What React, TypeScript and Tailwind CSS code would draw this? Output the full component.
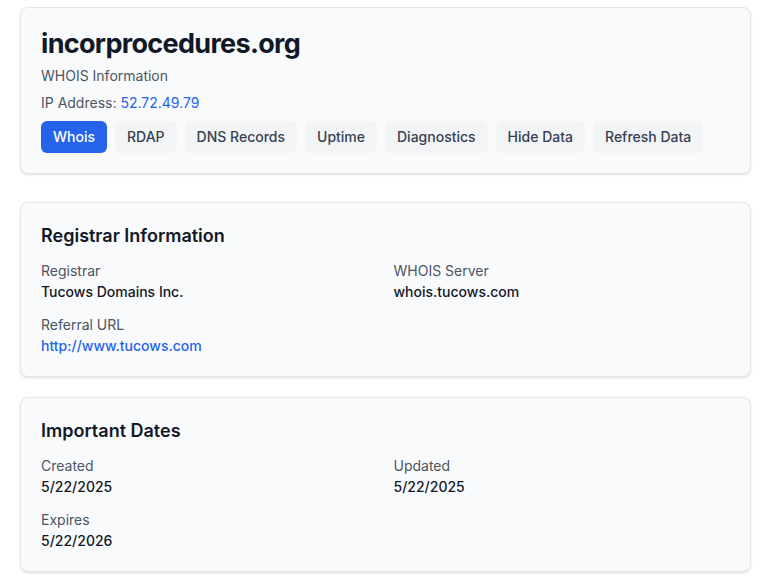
import * as React from "react";

const tabs = ["Whois", "RDAP", "DNS Records", "Uptime", "Diagnostics", "Hide Data", "Refresh Data"];

function Field({ label, value, link }: { label: string; value: string; link?: boolean }) {
  return (
    <div>
      <div className="text-sm leading-5 text-[#4b5563]">{label}</div>
      <div className={"mt-px text-sm leading-5 font-medium " + (link ? "text-[#2563eb]" : "text-[#111827]")}>
        {value}
      </div>
    </div>
  );
}

function Section({ title, children }: { title: string; children: React.ReactNode }) {
  return (
    <div className="rounded-lg border border-[#e5e7eb] bg-[#f9fafb] px-5 pt-[19px] pb-5 shadow-sm">
      <h2 className="text-lg leading-7 font-semibold text-[#111827]">{title}</h2>
      <div className="mt-[11px] grid grid-cols-2 gap-x-4 gap-y-[13px]">{children}</div>
    </div>
  );
}

export default function App() {
  return (
    <div className="min-h-screen bg-white pt-[7px] font-['Inter',sans-serif]">
      <div className="ml-5 w-[731px]">
        <div className="rounded-lg border border-[#e5e7eb] bg-[#f9fafb] p-5 shadow-sm">
          <h1 className="text-[27px] leading-8 font-bold tracking-tight text-[#111827]">incorprocedures.org</h1>
          <p className="mt-1.5 text-sm leading-5 text-[#4b5563]">WHOIS Information</p>
          <p className="mt-[7px] text-sm leading-5 text-[#4b5563]">
            IP Address: <span className="text-[#2563eb]">52.72.49.79</span>
          </p>
          <div className="mt-2 flex gap-2">
            {tabs.map((t, i) => (
              <button
                key={t}
                className={
                  "rounded-md px-3 py-1.5 text-sm leading-5 font-medium " +
                  (i === 0 ? "bg-[#2563eb] text-white" : "bg-[#f3f4f6] text-[#374151]")
                }
              >
                {t}
              </button>
            ))}
          </div>
        </div>

        <div className="mt-7">
          <Section title="Registrar Information">
            <Field label="Registrar" value="Tucows Domains Inc." />
            <Field label="WHOIS Server" value="whois.tucows.com" />
            <Field label="Referral URL" value="http://www.tucows.com" link />
          </Section>
        </div>

        <div className="mt-5">
          <Section title="Important Dates">
            <Field label="Created" value="5/22/2025" />
            <Field label="Updated" value="5/22/2025" />
            <Field label="Expires" value="5/22/2026" />
          </Section>
        </div>
      </div>
    </div>
  );
}
